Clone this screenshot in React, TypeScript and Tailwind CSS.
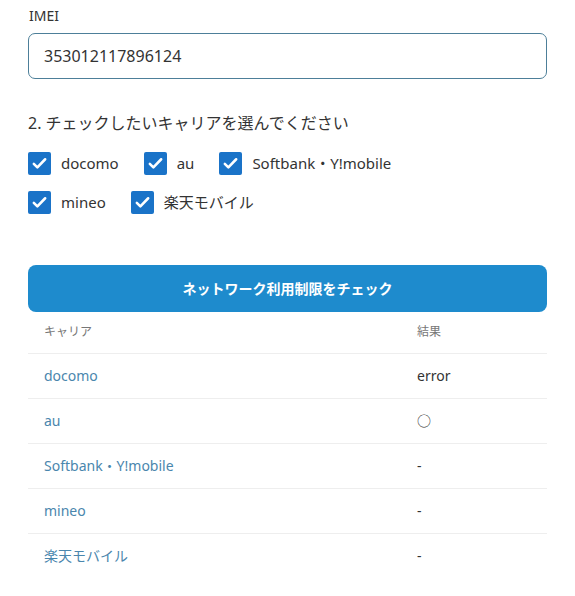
import React, { useState } from "react";

const carriers = ["docomo", "au", "Softbank・Y!mobile", "mineo", "楽天モバイル"];

const results: Record<string, string> = {
  docomo: "error",
  au: "○",
  "Softbank・Y!mobile": "-",
  mineo: "-",
  楽天モバイル: "-",
};

function Check({ label, checked, onChange }: { label: string; checked: boolean; onChange: () => void }) {
  return (
    <label className="flex items-center gap-[10px] cursor-pointer">
      <span
        onClick={onChange}
        className={
          "flex h-[23px] w-[23px] items-center justify-center rounded-[2px] " +
          (checked ? "bg-[#1a73c8]" : "border border-gray-400 bg-white")
        }
      >
        {checked && (
          <svg width="17" height="17" viewBox="0 0 24 24" fill="none">
            <path d="M4 12.5l5 5L20 6" stroke="white" strokeWidth="3.6" strokeLinecap="round" strokeLinejoin="round" />
          </svg>
        )}
      </span>
      <span className="text-[15px] text-[#333]">{label}</span>
    </label>
  );
}

export default function App() {
  const [imei, setImei] = useState("353012117896124");
  const [checked, setChecked] = useState<Record<string, boolean>>({
    docomo: true,
    au: true,
    "Softbank・Y!mobile": true,
    mineo: true,
    楽天モバイル: true,
  });

  const toggle = (c: string) => setChecked((p) => ({ ...p, [c]: !p[c] }));

  return (
    <div
      className="min-h-screen bg-white px-[28px] pt-[6px] text-[#333]"
      style={{ fontFamily: '"Noto Sans", "Noto Sans CJK JP", sans-serif' }}
    >
      <div className="pl-[1px] text-[14px] leading-[20px]">IMEI</div>
      <input
        value={imei}
        onChange={(e) => setImei(e.target.value)}
        className="mt-[7px] h-[46px] w-full rounded-[7px] border border-[#4d7f99] px-[15px] text-[16px] text-[#333] outline-none"
      />

      <div className="mt-[32px] text-[16px] leading-[24px]">2. チェックしたいキャリアを選んでください</div>

      <div className="mt-[17px] flex flex-col gap-[16px]">
        <div className="flex gap-[25px]">
          <Check label="docomo" checked={checked.docomo} onChange={() => toggle("docomo")} />
          <Check label="au" checked={checked.au} onChange={() => toggle("au")} />
          <Check label="Softbank・Y!mobile" checked={checked["Softbank・Y!mobile"]} onChange={() => toggle("Softbank・Y!mobile")} />
        </div>
        <div className="flex gap-[25px]">
          <Check label="mineo" checked={checked.mineo} onChange={() => toggle("mineo")} />
          <Check label="楽天モバイル" checked={checked["楽天モバイル"]} onChange={() => toggle("楽天モバイル")} />
        </div>
      </div>

      <button className="mt-[51px] h-[47px] w-full rounded-[8px] bg-[#1e8bcd] text-[14px] font-bold text-white">
        ネットワーク利用制限をチェック
      </button>

      <table className="w-full border-collapse">
        <thead>
          <tr className="border-b border-[#eee]">
            <th className="h-[41px] w-[373px] pl-[16px] text-left text-[12px] font-normal text-[#777]">キャリア</th>
            <th className="h-[41px] pl-[16px] text-left text-[12px] font-normal text-[#777]">結果</th>
          </tr>
        </thead>
        <tbody>
          {carriers.map((c, i) => (
            <tr key={c} className={i < carriers.length - 1 ? "border-b border-[#eee]" : ""}>
              <td className="h-[45px] pl-[16px] text-[14px] text-[#4a86ad]">{c}</td>
              <td className="h-[45px] pl-[16px] text-[14px] text-[#333]">{results[c]}</td>
            </tr>
          ))}
        </tbody>
      </table>
    </div>
  );
}
